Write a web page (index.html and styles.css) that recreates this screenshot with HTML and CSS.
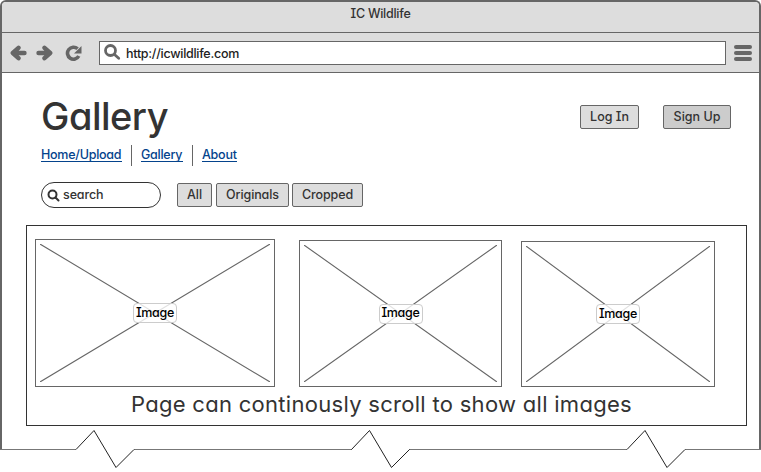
FILE: index.html
```html
<!DOCTYPE html>
<html lang="en">
<head>
<meta charset="utf-8">
<title>IC Wildlife</title>
<link rel="stylesheet" href="styles.css">
</head>
<body>
<div class="window">
  <header class="titlebar"><span class="title">IC Wildlife</span></header>
  <div class="toolbar">
    <svg class="icon back" width="17" height="16" viewBox="0 0 17 16"><path d="M8.500 2.800 2.800 8 8.500 13.200M3 8h11.500"/></svg>
    <svg class="icon forward" width="17" height="16" viewBox="0 0 17 16"><path d="M8.500 2.800 14.200 8 8.500 13.200M14 8H2.500"/></svg>
    <svg class="icon reload" width="17" height="16" viewBox="0 0 17 16"><path class="arc" d="M13.800 11A6 6 0 1 1 12.600 3.800"/><path class="tip" d="M16.500 1v7.500H9z"/></svg>
    <div class="address">
      <svg class="icon lens" width="17" height="17" viewBox="0 0 17 17"><circle cx="6.500" cy="6.500" r="5"/><path d="m10.500 10.500 4.200 3.800"/></svg>
      <span class="url">http://icwildlife.com</span>
    </div>
    <div class="menu"><i></i><i></i><i></i></div>
  </div>
  <main class="page">
    <div class="heading">
      <h1>Gallery</h1>
      <div class="account">
        <button class="btn login">Log In</button>
        <button class="btn signup">Sign Up</button>
      </div>
    </div>
    <nav class="links">
      <a class="home" href="#">Home/Upload</a>
      <a class="gallery" href="#">Gallery</a>
      <a class="about" href="#">About</a>
    </nav>
    <div class="filters">
      <div class="search">
        <svg class="icon" width="13" height="13" viewBox="0 0 13 13"><circle cx="5.500" cy="5.500" r="4"/><path d="m8.500 8.500 3 3"/></svg>
        <span>search</span>
      </div>
      <button class="btn all">All</button>
      <button class="btn originals">Originals</button>
      <button class="btn cropped">Cropped</button>
    </div>
    <section class="panel">
      <div class="images">
        <div class="image wide"><svg viewBox="0 0 230 138" preserveAspectRatio="none"><path d="M0 0 230 138M230 0 0 138"/></svg><span>Image</span></div>
        <div class="image medium"><svg viewBox="0 0 193 137" preserveAspectRatio="none"><path d="M0 0 193 137M193 0 0 137"/></svg><span>Image</span></div>
        <div class="image small"><svg viewBox="0 0 184 136" preserveAspectRatio="none"><path d="M0 0 184 136M184 0 0 136"/></svg><span>Image</span></div>
      </div>
      <p class="note">Page can continously scroll to show all images</p>
    </section>
  </main>
</div>
<svg class="tear" width="761" height="46" viewBox="0 0 761 46">
  <path class="edge" d="M0 23.500H76M134 23.500H352M409 23.500H627M685 23.500H761"/>
  <path class="zig" d="M76 23.500 94 4.500 116 41.500 134 23.500M351.500 23.500 369.500 4.500 391.500 41.500 409.500 23.500M627 23.500 645 4.500 667 41.500 685 23.500"/>
</svg>
</body>
</html>
```
FILE: styles.css
```css
* { box-sizing: border-box; }

body {
  margin: 0;
  background: #fff;
  color: #333;
  font: 500 12.5px/16px Inter, "Open Sans", sans-serif;
  font-feature-settings: "cv11", "cv08";
  white-space: nowrap;
  overflow: hidden;
}

.window {
  width: 761px;
  height: 449px;
  border: 2px solid #666;
  border-bottom: 0;
  border-radius: 6px 6px 0 0;
  background: #fff;
  overflow: hidden;
}

.titlebar {
  height: 31px;
  padding-top: 4px;
  background: #ddd;
  border-bottom: 1px solid #666;
  text-align: center;
  letter-spacing: -.25px;
}

.toolbar {
  display: flex;
  align-items: center;
  height: 40px;
  padding-left: 8px;
  background: #ddd;
  border-bottom: 1px solid #666;
}

.icon { display: block; flex: none; fill: none; stroke: #666; stroke-width: 4.4; stroke-linecap: round; stroke-linejoin: round; }
.forward { margin-left: 9px; }
.reload { margin-left: 12px; }
.reload .arc { stroke-width: 3.6; stroke-linecap: butt; }
.reload .tip { fill: #666; stroke: none; }
.lens { stroke-width: 2.8; }

.address {
  display: flex;
  align-items: center;
  width: 627px;
  height: 24px;
  margin-left: 17px;
  padding-left: 4px;
  border: 1px solid #666;
  background: #fff;
  color: #222;
}
.url { margin: 2px 0 0 5px; letter-spacing: -.27px; }

.menu { display: flex; flex-direction: column; gap: 2px; width: 18px; margin-left: 8px; }
.menu i { height: 4px; border-radius: 2px; background: #666; }

.page { padding: 0 12px 0 24px; }

.heading { display: flex; justify-content: space-between; height: 72px; padding: 21px 16px 0 15px; }
h1 { margin: 0; font-size: 38px; font-weight: 500; line-height: 44px; letter-spacing: -.5px; }
.account { display: flex; gap: 24px; padding-top: 11px; }

.btn {
  height: 24px;
  padding: 0;
  border: 1px solid #666;
  border-radius: 2px;
  background: #ddd;
  color: #333;
  font: inherit;
  font-feature-settings: inherit;
  text-align: center;
}
.login { width: 59px; }
.signup { width: 68px; background: #ccc; }

.links { display: flex; height: 21px; margin-left: 15px; }
.links a {
  height: 17px;
  margin-right: 9px;
  border-bottom: 1px solid #04438c;
  color: #04438c;
  text-decoration: none;
  line-height: 20px;
  letter-spacing: -.25px;
}
.home { width: 81px; }
.gallery { width: 42px; }
.about { width: 35px; }
.links a + a { margin-left: 0; }
.links a + a::before {
  content: "";
  position: absolute;
  width: 1px;
  height: 21px;
  margin-left: -10px;
  background: #666;
}
.links .home, .links .gallery { margin-right: 19px; }

.filters { display: flex; align-items: center; height: 26px; margin: 16px 0 17px 15px; }
.search {
  display: flex;
  align-items: center;
  width: 120px;
  height: 26px;
  margin-right: 16px;
  padding-left: 5px;
  border: 1px solid #333;
  border-radius: 13px;
}
.search .icon { stroke: #333; stroke-width: 2; }
.search span { margin-left: 3px; letter-spacing: -.1px; }
.all { width: 35px; margin-right: 4px; }
.originals { width: 73px; margin-right: 3px; letter-spacing: -.1px; }
.cropped { width: 71px; letter-spacing: -.1px; }

.panel { width: 721px; height: 201px; border: 1px solid #333; padding: 13px 8px 0; }
.images { display: flex; align-items: flex-end; height: 148px; }
.image { display: grid; place-items: center; border: 1px solid #666; padding: 4px; }
.image > * { grid-area: 1 / 1; }
.image svg { width: 100%; height: 100%; stroke: #666; stroke-width: 1.1; }
.image span {
  z-index: 1;
  width: 44px;
  height: 20px;
  border: 1px solid #ccc;
  border-radius: 4px;
  background: rgba(255, 255, 255, .8);
  color: #000;
  line-height: 18px;
  text-align: center;
  letter-spacing: -.3px;
}
.wide { width: 240px; height: 148px; }
.medium { width: 203px; height: 147px; margin-left: 24px; }
.medium span { line-height: 16px; }
.small { width: 194px; height: 146px; margin-left: 19px; }

.note { margin: 2px 0 0 96px; font-size: 22px; font-weight: 400; line-height: 30px; letter-spacing: .29px; }

.tear { display: block; margin-top: -23px; fill: none; }
.edge { stroke: #777; }
.zig { stroke: #222; }
```
